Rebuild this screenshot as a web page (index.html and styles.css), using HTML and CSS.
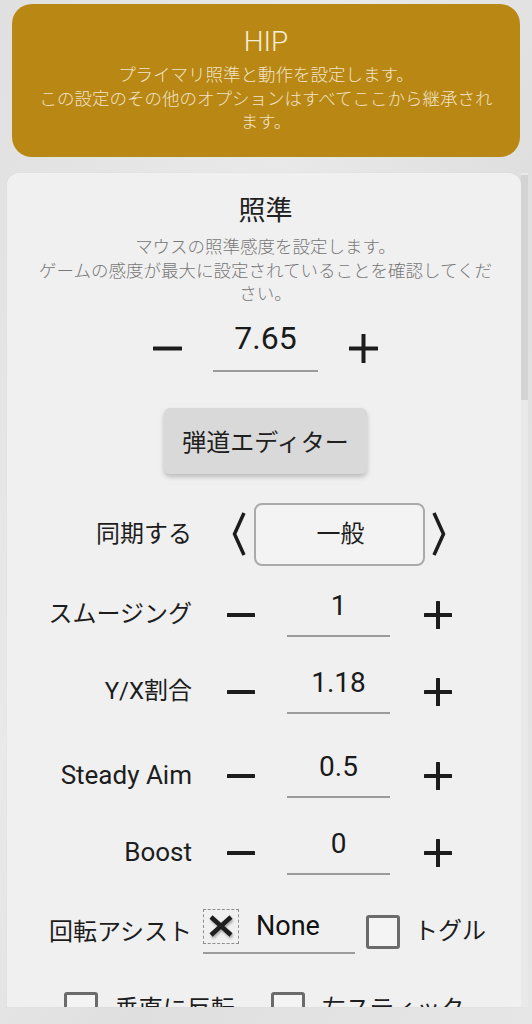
FILE: index.html
```html
<!DOCTYPE html>
<html lang="ja">
<head>
<meta charset="utf-8">
<title>HIP 設定</title>
<link rel="stylesheet" href="styles.css">
</head>
<body>
<header class="hero">
  <h1 class="hero-title">HIP</h1>
  <p class="hero-desc">プライマリ照準と動作を設定します。<br>この設定のその他のオプションはすべてここから継承されます。</p>
</header>

<div class="panel">
  <main class="panel-body">
    <h2 class="section-title">照準</h2>
    <p class="section-desc">マウスの照準感度を設定します。<br>ゲームの感度が最大に設定されていることを確認してください。</p>

    <div class="stepper-main">
      <button class="icon-btn icon-main" aria-label="減らす">
        <svg width="29" height="29" viewBox="0 0 29 29"><rect x="0" y="12.5" width="29" height="4" rx="0.5"/></svg>
      </button>
      <div class="field field-main">7.65</div>
      <button class="icon-btn icon-main" aria-label="増やす">
        <svg width="29" height="29" viewBox="0 0 29 29"><rect x="0" y="12.5" width="29" height="4" rx="0.5"/><rect x="12.5" y="0" width="4" height="29" rx="0.5"/></svg>
      </button>
    </div>

    <button class="raised-btn">弾道エディター</button>

    <div class="form-row sync-row">
      <span class="label">同期する</span>
      <svg class="chevron chevron-left" width="14" height="46" viewBox="0 0 14 46"><polyline points="12,2 2.5,23 12,44"/></svg>
      <div class="select-box">一般</div>
      <svg class="chevron chevron-right" width="14" height="46" viewBox="0 0 14 46"><polyline points="2,2 11.5,23 2,44"/></svg>
    </div>

    <div class="form-row step-row">
      <span class="label">スムージング</span>
      <button class="icon-btn icon-row" aria-label="減らす"><svg width="28" height="28" viewBox="0 0 28 28"><rect x="0" y="12" width="28" height="4" rx="0.5"/></svg></button>
      <div class="field field-row">1</div>
      <button class="icon-btn icon-row" aria-label="増やす"><svg width="28" height="28" viewBox="0 0 28 28"><rect x="0" y="12" width="28" height="4" rx="0.5"/><rect x="12" y="0" width="4" height="28" rx="0.5"/></svg></button>
    </div>

    <div class="form-row step-row">
      <span class="label">Y/X割合</span>
      <button class="icon-btn icon-row" aria-label="減らす"><svg width="28" height="28" viewBox="0 0 28 28"><rect x="0" y="12" width="28" height="4" rx="0.5"/></svg></button>
      <div class="field field-row">1.18</div>
      <button class="icon-btn icon-row" aria-label="増やす"><svg width="28" height="28" viewBox="0 0 28 28"><rect x="0" y="12" width="28" height="4" rx="0.5"/><rect x="12" y="0" width="4" height="28" rx="0.5"/></svg></button>
    </div>

    <div class="form-row step-row step-row-wide">
      <span class="label label-latin">Steady Aim</span>
      <button class="icon-btn icon-row" aria-label="減らす"><svg width="28" height="28" viewBox="0 0 28 28"><rect x="0" y="12" width="28" height="4" rx="0.5"/></svg></button>
      <div class="field field-row">0.5</div>
      <button class="icon-btn icon-row" aria-label="増やす"><svg width="28" height="28" viewBox="0 0 28 28"><rect x="0" y="12" width="28" height="4" rx="0.5"/><rect x="12" y="0" width="4" height="28" rx="0.5"/></svg></button>
    </div>

    <div class="form-row step-row">
      <span class="label label-latin">Boost</span>
      <button class="icon-btn icon-row" aria-label="減らす"><svg width="28" height="28" viewBox="0 0 28 28"><rect x="0" y="12" width="28" height="4" rx="0.5"/></svg></button>
      <div class="field field-row">0</div>
      <button class="icon-btn icon-row" aria-label="増やす"><svg width="28" height="28" viewBox="0 0 28 28"><rect x="0" y="12" width="28" height="4" rx="0.5"/><rect x="12" y="0" width="4" height="28" rx="0.5"/></svg></button>
    </div>

    <div class="form-row assist-row">
      <span class="label">回転アシスト</span>
      <div class="assist-select">
        <span class="clear-box">
          <svg width="26" height="22" viewBox="0 0 26 22"><path d="M3 2 L23 20 M23 2 L3 20"/></svg>
        </span>
        <span class="assist-value">None</span>
      </div>
      <span class="checkbox"></span>
      <span class="check-label">トグル</span>
    </div>

    <div class="check-row">
      <span class="checkbox"></span>
      <span class="check-label">垂直に反転</span>
      <span class="checkbox checkbox-gap"></span>
      <span class="check-label">左スティック</span>
    </div>
  </main>
  <div class="scrollbar"><div class="scroll-thumb"></div></div>
</div>
</body>
</html>
```

FILE: styles.css
```css
* {
  box-sizing: border-box;
}

html, body {
  height: 100%;
}

body {
  margin: 0;
  overflow: hidden;
  background: linear-gradient(115deg, #e0e0e0 0%, #e9e9e9 35%, #dfdfdf 60%, #e6e6e6 100%);
  font-family: Roboto, "Noto Sans CJK JP", sans-serif;
  color: #1d1d1d;
}

button {
  font: inherit;
  color: inherit;
  border: 0;
  background: none;
  padding: 0;
  cursor: pointer;
}

/* gold banner */
.hero {
  margin: 4px 12px 0 12px;
  height: 153px;
  padding-top: 22px;
  border-radius: 20px;
  background: #b98714;
  text-align: center;
}

.hero-title {
  margin: 0;
  font-size: 28px;
  line-height: 32px;
  font-weight: 300;
  color: #f6eedb;
}

.hero-desc {
  width: 462px;
  margin: 6px auto 0;
  font-size: 17.5px;
  line-height: 23.5px;
  font-weight: 300;
  color: #f0e3c6;
}

/* scrolling settings panel */
.panel {
  display: flex;
  margin: 16px 4px 0 7px;
  height: 834px;
}

.panel-body {
  flex: 1;
  overflow: hidden;
  padding: 20px 0 0 3px;
  background: #f0f0f0;
  border-radius: 12px 12px 0 0;
  box-shadow: 0 0 2px rgba(0, 0, 0, 0.06);
}

.scrollbar {
  width: 7px;
  padding-top: 2px;
  background: #e9e9e9;
}

.scroll-thumb {
  height: 225px;
  background: #d3d3d3;
}

.section-title {
  margin: 0;
  text-align: center;
  font-size: 27px;
  line-height: 36px;
  font-weight: 400;
  color: #222;
}

.section-desc {
  width: 462px;
  margin: 7px auto 0;
  text-align: center;
  font-size: 17.5px;
  line-height: 23.5px;
  font-weight: 300;
  color: #777;
}

/* main sensitivity stepper */
.stepper-main {
  display: flex;
  justify-content: center;
  align-items: flex-start;
  gap: 31px;
  margin-top: 11px;
}

.icon-btn svg {
  display: block;
  fill: #1c1c1c;
}

.icon-main {
  margin-top: 16px;
}

.field {
  text-align: center;
  border-bottom: 2px solid #9b9b9b;
  color: #1a1a1a;
}

.field-main {
  width: 105px;
  font-size: 32px;
  line-height: 40px;
  padding-bottom: 12px;
}

.raised-btn {
  display: block;
  margin: 36px auto 0;
  width: 203px;
  height: 66px;
  border-radius: 6px;
  background: #d9d9d9;
  box-shadow: 0 3px 5px rgba(0, 0, 0, 0.22);
  font-size: 24px;
  color: #202020;
}

/* labelled rows */
.form-row {
  display: flex;
  align-items: flex-start;
}

.label {
  width: 182px;
  flex: none;
  text-align: right;
  font-size: 24px;
  line-height: 32px;
  white-space: nowrap;
  color: #1d1d1d;
}

.label-latin {
  font-size: 26px;
}

.sync-row {
  margin-top: 29px;
  align-items: center;
}

.chevron {
  flex: none;
  fill: none;
  stroke: #1c1c1c;
  stroke-width: 3.5;
  stroke-linejoin: miter;
}

.chevron-left {
  margin-left: 40px;
}

.chevron-right {
  margin-left: 7px;
}

.select-box {
  margin-left: 8px;
  width: 171px;
  height: 63px;
  border: 2px solid #aaaaaa;
  border-radius: 8px;
  background: #f3f3f3;
  font-size: 24px;
  line-height: 59px;
  text-align: center;
  padding-left: 2px;
}

.step-row {
  margin-top: 28px;
}

.sync-row + .step-row {
  margin-top: 22px;
}

.step-row-wide {
  margin-top: 35px;
}

.step-row .label {
  margin-top: 10px;
}

.icon-row {
  margin-top: 13px;
}

.step-row .icon-row:first-of-type {
  margin-left: 35px;
}

.field-row {
  margin-left: 32px;
  width: 103px;
  font-size: 28px;
  line-height: 36px;
  padding-bottom: 11px;
}

.field-row + .icon-row {
  margin-left: 34px;
}

/* rotation assist */
.assist-row {
  margin-top: 34px;
  align-items: center;
}

.assist-row .label {
  margin-top: 2px;
}

.assist-select {
  display: flex;
  align-items: center;
  margin-left: 11px;
  width: 152px;
  padding-bottom: 8px;
  border-bottom: 2px solid #9b9b9b;
}

.clear-box {
  display: flex;
  align-items: center;
  justify-content: center;
  width: 36px;
  height: 35px;
  border: 1px dashed #8e8e8e;
}

.clear-box svg {
  display: block;
  fill: none;
  stroke: #1e1e1e;
  stroke-width: 4.5;
  filter: drop-shadow(1px 2px 1px rgba(0, 0, 0, 0.3));
}

.assist-value {
  margin-left: 17px;
  font-size: 27px;
  line-height: 32px;
  color: #121212;
}

.checkbox {
  flex: none;
  width: 34px;
  height: 34px;
  border: 3px solid #6b6b6b;
  border-radius: 3px;
  background: #f4f4f4;
}

.assist-row .checkbox {
  margin-left: 11px;
  margin-top: 2px;
}

.check-label {
  margin-left: 14px;
  font-size: 24px;
  line-height: 32px;
  white-space: nowrap;
}

.check-row {
  display: flex;
  justify-content: center;
  align-items: center;
  margin-top: 38px;
  padding-right: 3px;
}

.check-row .check-label {
  margin-left: 17px;
}

.check-row .checkbox-gap {
  margin-left: 36px;
}
```
